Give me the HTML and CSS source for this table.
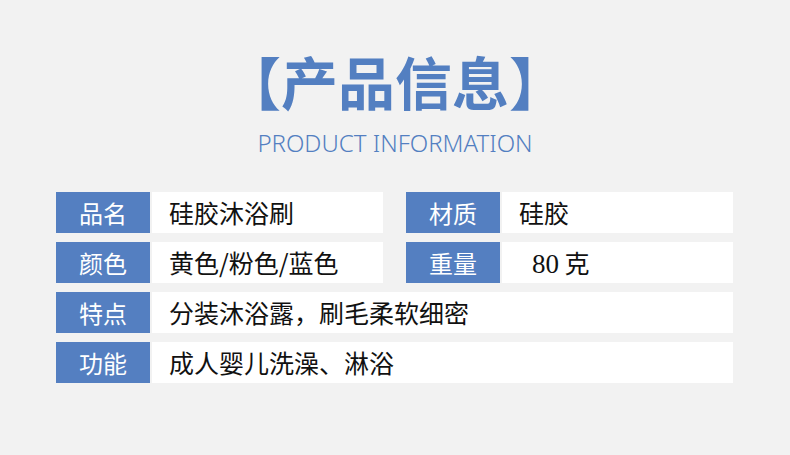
FILE: index.html
```html
<!DOCTYPE html>
<html lang="zh-CN">
<head>
<meta charset="utf-8">
<link rel="stylesheet" href="styles.css">
</head>
<body>
<div class="page">
  <header class="head">
    <h1 class="title">【产品信息】</h1>
    <p class="subtitle">PRODUCT INFORMATION</p>
  </header>
  <div class="table">
    <div class="row split">
      <div class="cell"><span class="label">品名</span><span class="value">硅胶沐浴刷</span></div>
      <div class="cell"><span class="label">材质</span><span class="value">硅胶</span></div>
    </div>
    <div class="row split">
      <div class="cell"><span class="label">颜色</span><span class="value">黄色/粉色/蓝色</span></div>
      <div class="cell"><span class="label">重量</span><span class="value weight"><span class="num">80</span> 克</span></div>
    </div>
    <div class="row">
      <div class="cell"><span class="label">特点</span><span class="value">分装沐浴露，刷毛柔软细密</span></div>
    </div>
    <div class="row">
      <div class="cell"><span class="label">功能</span><span class="value">成人婴儿洗澡、淋浴</span></div>
    </div>
  </div>
</div>
</body>
</html>
```

FILE: styles.css
```css
html, body {
  margin: 0;
  padding: 0;
  background: #f2f2f2;
}
.page {
  width: 790px;
  height: 455px;
  font-family: "Noto Sans CJK SC", "Noto Sans", sans-serif;
}
.head {
  padding-top: 47px;
  text-align: center;
}
.title {
  margin: 0;
  font-size: 57px;
  line-height: 66px;
  font-weight: 700;
  color: #537fc1;
}
.subtitle {
  margin: 15px 0 0;
  font-family: "Noto Sans", sans-serif;
  font-weight: 300;
  font-size: 24px;
  line-height: 30px;
  color: #537fc1;
}
.table {
  margin: 34px 0 0 56px;
  width: 677px;
  display: flex;
  flex-direction: column;
  gap: 9px;
}
.row {
  display: flex;
  gap: 23px;
}
.cell {
  flex: 1;
  display: flex;
  gap: 2px;
  height: 41px;
}
.label {
  width: 94px;
  flex: none;
  background: #547fc1;
  color: #fff;
  font-size: 24px;
  line-height: 41px;
  text-align: center;
}
.value {
  flex: 1;
  background: #fff;
  color: #111;
  font-size: 25px;
  line-height: 41px;
  padding-left: 17px;
}
.weight {
  padding-left: 30px;
}
.num {
  font-family: "Liberation Serif", serif;
  font-size: 27px;
}
```
